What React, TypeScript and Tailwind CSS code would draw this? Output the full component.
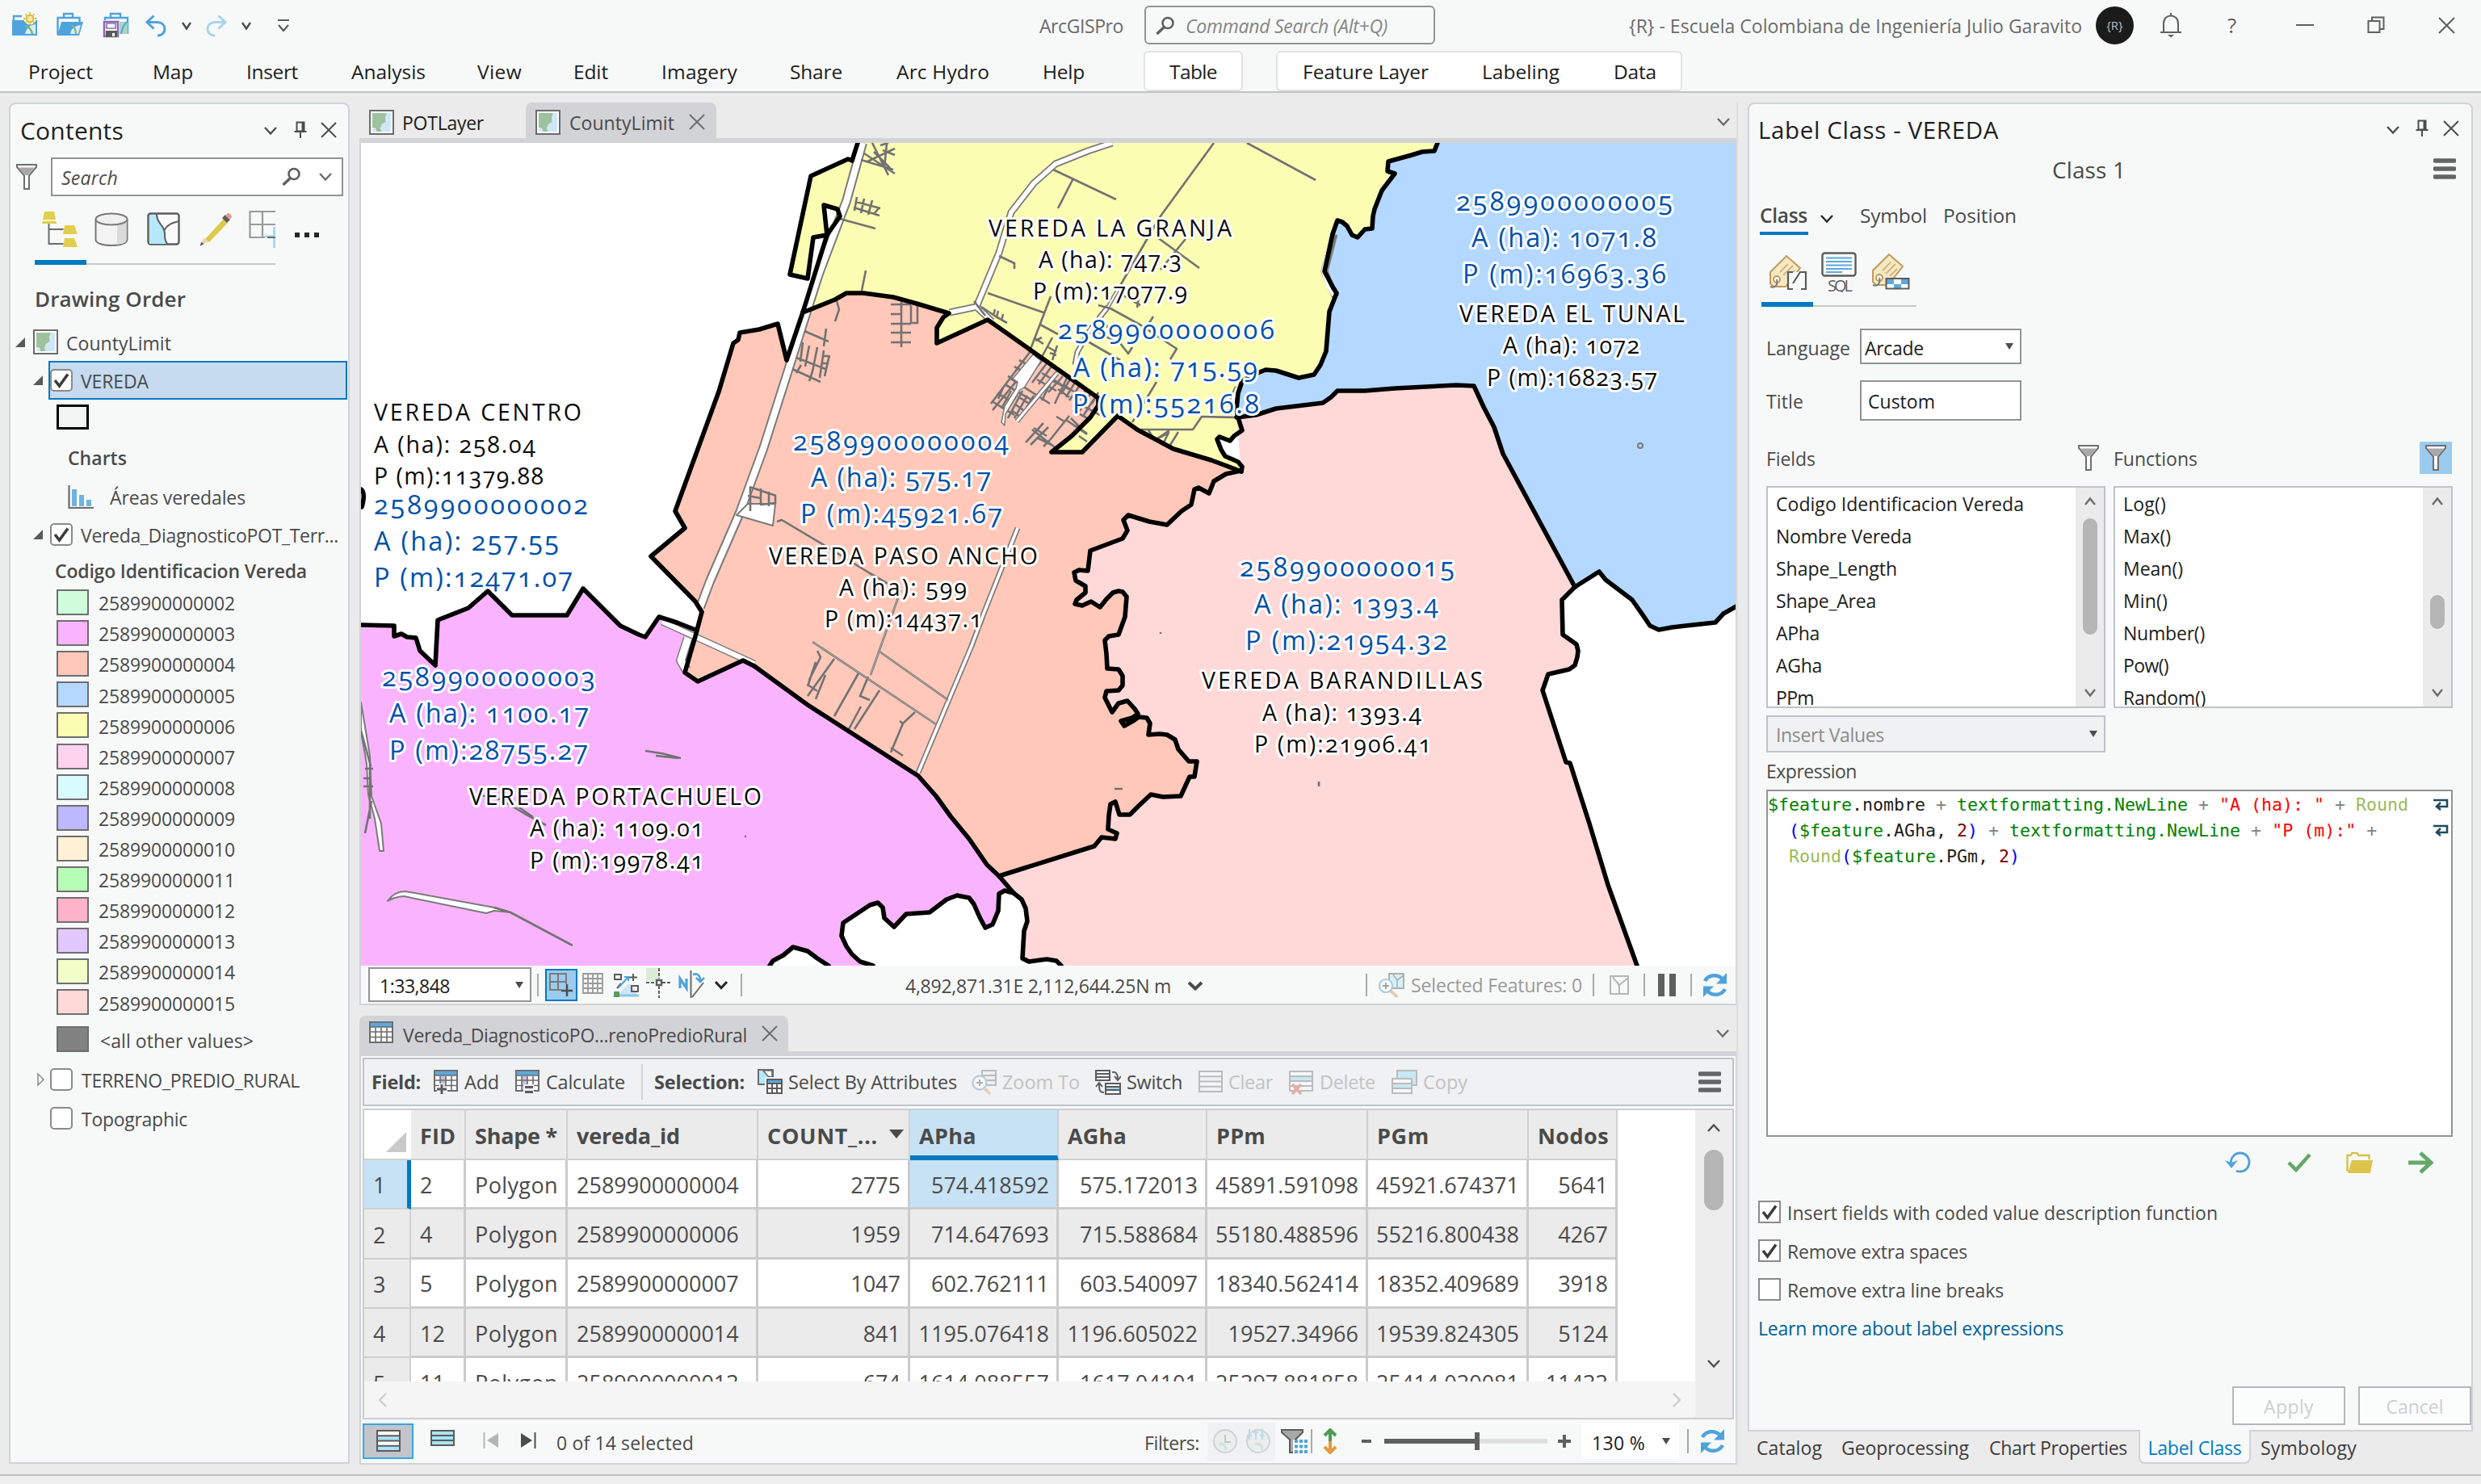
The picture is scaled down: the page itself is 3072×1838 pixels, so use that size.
import React, { useLayoutEffect, useRef } from "react";

/* ------------------------------------------------------------------ */
/* Text helper: spreads a label over a fixed advance width             */
/* ------------------------------------------------------------------ */
function Fit({ w, className = "", children }: { w: number; className?: string; children: string }) {
  const ref = useRef<HTMLSpanElement>(null);
  useLayoutEffect(() => {
    const el = ref.current;
    if (!el) return;
    el.style.letterSpacing = "0px";
    const natural = el.getBoundingClientRect().width;
    el.style.letterSpacing = `${(w - natural) / Math.max(1, children.length)}px`;
  }, [w, children]);
  return (
    <span ref={ref} className={`inline-block flex-none whitespace-pre ${className}`}>
      {children}
    </span>
  );
}

type SvgProps = { w: number; h: number; className?: string; children: React.ReactNode };
function Icon({ w, h, className = "", children }: SvgProps) {
  return (
    <svg width={w} height={h} viewBox={`0 0 ${w} ${h}`} fill="none" className={`flex-none ${className}`}>
      {children}
    </svg>
  );
}

const Chevron = ({ className = "", w = 16, c = "#4c4c4c", sw = 2.4, up = false }: { className?: string; w?: number; c?: string; sw?: number; up?: boolean }) => (
  <Icon w={w} h={12} className={className}>
    <path d={up ? `M1 10L${w / 2} 2.5L${w - 1} 10` : `M1 2L${w / 2} 9.5L${w - 1} 2`} stroke={c} strokeWidth={sw} />
  </Icon>
);
const Cross = ({ s = 20, className = "", c = "#4c4c4c" }: { s?: number; className?: string; c?: string }) => (
  <Icon w={s} h={s} className={className}>
    <path d={`M1 1L${s - 1} ${s - 1}M${s - 1} 1L1 ${s - 1}`} stroke={c} strokeWidth={2} />
  </Icon>
);
const Pin = ({ className = "" }: { className?: string }) => (
  <Icon w={16} h={22} className={className}>
    <path d="M3.5 1.5h9v11h-9zM0.5 13h15M8 13v8M10.5 2v11" stroke="#4c4c4c" strokeWidth={2} />
  </Icon>
);
const Tri = ({ className = "" }: { className?: string }) => (
  <Icon w={10} h={8} className={className}>
    <path d="M0 0h10L5 8z" fill="#4c4c4c" />
  </Icon>
);
const Expander = ({ className = "" }: { className?: string }) => (
  <Icon w={14} h={14} className={className}>
    <path d="M13 1v12H1z" fill="#5a5a5a" />
  </Icon>
);
const Funnel = ({ className = "" }: { className?: string }) => (
  <Icon w={28} h={34} className={className}>
    <path d="M2 2h24v3l-9 10.500v16.500h-6V15.500L2 5z" fill="#fff" stroke="#6e6e6e" strokeWidth={2} />
    <path d="M4 5.500h20l-8 9.500h-4z" fill="#a8a8a8" />
  </Icon>
);
const Magnifier = ({ className = "" }: { className?: string }) => (
  <Icon w={24} h={24} className={className}>
    <circle cx="15" cy="8.500" r="6.500" stroke="#5f5f5f" strokeWidth={2.6} />
    <path d="M10.500 13.500L1.500 22" stroke="#5f5f5f" strokeWidth={3.4} />
  </Icon>
);
const MapIcon = ({ className = "" }: { className?: string }) => (
  <Icon w={31} h={31} className={className}>
    <rect x="1" y="1" width="29" height="29" fill="#fff" stroke="#6b6b6b" strokeWidth={2} />
    <path d="M4 4h18l-2 6 1 5-5 3-2 5 2 4H9l-1-4-4-1z" fill="#9cc29e" />
    <path d="M22 4h5v23H16l-2-4 2-5 5-3-1-5zM4 23l4 1 1 3H4z" fill="#cfe6f8" />
  </Icon>
);
const Hamburger = ({ className = "" }: { className?: string }) => (
  <Icon w={28} h={26} className={className}>
    <path d="M2 3h24M2 13h24M2 23h24" stroke="#646464" strokeWidth={5.500} strokeLinecap="round" />
  </Icon>
);
const Refresh = ({ className = "" }: { className?: string }) => (
  <Icon w={33} h={32} className={className}>
    <path d="M4 11C8 3.500 19 1.500 26 8.500" stroke="#4fa3dc" strokeWidth={4.500} />
    <path d="M31 1v13.500H18z" fill="#4fa3dc" />
    <path d="M29 21C25 28.500 14 30.500 7 23.500" stroke="#4fa3dc" strokeWidth={4.500} />
    <path d="M2 31V17.500h13z" fill="#4fa3dc" />
  </Icon>
);
const Sep = ({ className = "" }: { className?: string }) => <div className={`w-[2px] flex-none bg-[#a9a9a9] ${className}`} />;

/* ------------------------------------------------------------------ */
/* Title bar and ribbon tabs                                           */
/* ------------------------------------------------------------------ */
function TitleBar() {
  return (
    <div className="flex h-[62px] items-center text-[23px] text-[#6b6b6b]">
      <Icon w={32} h={30} className="ml-[15px] mb-[3px]">
        <path d="M2 10V5h10" stroke="#4fa3dc" strokeWidth={2.4} />
        <rect x="0" y="10" width="31" height="19" fill="#4fa3dc" />
        <path d="M16 27c2-9 7-11 13-12v12z" fill="#d9ecf9" />
        <path d="M16 17c5 1 8 5 9 10" stroke="#7bb77d" strokeWidth={2.500} />
        <circle cx="22" cy="8" r="7.500" fill="#fff" />
        <circle cx="22" cy="8" r="4.500" fill="#f7e9a0" stroke="#d9b535" strokeWidth={2} />
        <path d="M22 0v2M22 14v2M14 8h2M28 8h2M16.300 2.300l1.500 1.500M26.200 12.200l1.500 1.500M27.700 2.300l-1.500 1.500M17.800 12.200l-1.500 1.500" stroke="#d9b535" strokeWidth={1.800} />
      </Icon>
      <Icon w={33} h={30} className="ml-[23px] mb-[3px]">
        <path d="M9 7V2h11v5M1.500 28V7h27v5" stroke="#4fa3dc" strokeWidth={2.400} />
        <path d="M6 12h27l-5 17H1z" fill="#4fa3dc" />
        <path d="M17 27c1-7 6-10 13-11l-3 11z" fill="#d9ecf9" />
        <path d="M19 17c4 2 5 5 5 10" stroke="#7bb77d" strokeWidth={2.400} />
      </Icon>
      <Icon w={33} h={34} className="ml-[24px] mt-[1px]">
        <path d="M10 7V2h12v5M3 10V7h28v20" stroke="#4fa3dc" strokeWidth={2.400} />
        <path d="M21 12h10v15H21z" fill="#a8d5c0" />
        <path d="M30 12c-4 4-6 9-7 15" stroke="#4fa3dc" strokeWidth={2} />
        <path d="M2 12h17v18H2z" fill="#fff" stroke="#8b6bb8" strokeWidth={2.600} />
        <path d="M5 14h11v6H5z" fill="#fff" stroke="#8b6bb8" strokeWidth={1.600} />
        <path d="M4 23h14v8H4z" fill="#5b5b5b" />
        <path d="M12 26h3v4h-3z" fill="#fff" />
      </Icon>
      <Icon w={28} h={28} className="ml-[19px] mt-[1px]">
        <path d="M3 9.500h12c7 0 10 4 10 8.500 0 4-3 8-9 8" stroke="#4fa3dc" strokeWidth={3} />
        <path d="M11.500 1.500L3 9.500l8.500 8" stroke="#4fa3dc" strokeWidth={3} />
      </Icon>
      <Chevron className="ml-[18px] mt-[2px]" w={12} />
      <Icon w={28} h={28} className="ml-[17px] mt-[1px]">
        <path d="M25 9.500H13c-7 0-10 4-10 8.500 0 4 3 8 9 8" stroke="#a9d3ee" strokeWidth={3} />
        <path d="M16.500 1.500L25 9.500l-8.500 8" stroke="#a9d3ee" strokeWidth={3} />
      </Icon>
      <Chevron className="ml-[17px] mt-[2px]" w={12} />
      <Icon w={16} h={18} className="ml-[32px] mt-[1px]">
        <path d="M1 2h14M2 8l6 7 6-7" stroke="#5b5b5b" strokeWidth={2.200} />
      </Icon>
      <Fit w={104} className="ml-[928px] mt-[3px]">ArcGISPro</Fit>
      <div className="ml-[26px] flex h-[48px] w-[360px] flex-none items-center rounded-[6px] border-2 border-[#939393]">
        <Magnifier className="ml-[12px] mt-[2px]" />
        <Fit w={250} className="ml-[13px] mt-[3px] italic text-[#858585]">Command Search (Alt+Q)</Fit>
      </div>
      <Fit w={561} className="ml-[240px] mt-[3px]">{"{R} - Escuela Colombiana de Ingeniería Julio Garavito"}</Fit>
      <div className="ml-[17px] flex size-[47px] flex-none items-center justify-center rounded-full bg-[#1b1b1b] text-[15px] text-[#bdbdbd]">
        {"{R}"}
      </div>
      <Icon w={28} h={32} className="ml-[32px]">
        <path d="M5 24v-10c0-6 4-9.500 9-9.500s9 3.500 9 9.500v10M1 25h26M14 4.500V1" stroke="#5f5f5f" strokeWidth={2} />
        <path d="M10 28h8l-4 3.500z" fill="#5f5f5f" />
      </Icon>
      <span className="ml-[56px] w-[20px] text-[26px] text-[#5f5f5f]">?</span>
      <Icon w={22} h={4} className="ml-[65px]"><path d="M0 2h22" stroke="#5f5f5f" strokeWidth={2} /></Icon>
      <Icon w={22} h={22} className="ml-[66px]">
        <path d="M1.500 6h14v14h-14zM6 6V1.500h14.500V16H16" stroke="#5f5f5f" strokeWidth={2} />
      </Icon>
      <Cross s={21} className="ml-[66px]" c="#5f5f5f" />
    </div>
  );
}

const menus: [string, number, number][] = [
  ["Project", 35, 80], ["Map", 74, 50], ["Insert", 66, 64], ["Analysis", 66, 92], ["View", 64, 55], ["Edit", 64, 43],
  ["Imagery", 66, 94], ["Share", 65, 65], ["Arc Hydro", 67, 115], ["Help", 66, 52],
];

function Ribbon() {
  return (
    <div className="flex h-[51px] items-center text-[24.500px] text-[#1c1c1c]">
      {menus.map(([t, gap, w]) => (
        <span key={t} className="mt-[4px] flex-none" style={{ marginLeft: gap }}>
          <Fit w={w}>{t}</Fit>
        </span>
      ))}
      <div className="ml-[73px] flex h-[50px] w-[123px] flex-none items-center justify-center rounded-[6px] border-2 border-[#e2e2e2] bg-white">
        <Fit w={59} className="mt-[4px]">Table</Fit>
      </div>
      <div className="ml-[41px] flex h-[50px] w-[503px] flex-none items-center rounded-[6px] border-2 border-[#e2e2e2] bg-white">
        <Fit w={156} className="ml-[31px] mt-[4px]">Feature Layer</Fit>
        <Fit w={96} className="ml-[66px] mt-[4px]">Labeling</Fit>
        <Fit w={53} className="ml-[67px] mt-[4px]">Data</Fit>
      </div>
    </div>
  );
}

/* ------------------------------------------------------------------ */
/* Contents pane                                                       */
/* ------------------------------------------------------------------ */
const swatches: [string, string][] = [
  ["2589900000002", "bg-[#d0fedd]"], ["2589900000003", "bg-[#fab4ff]"], ["2589900000004", "bg-[#ffc8b9]"],
  ["2589900000005", "bg-[#b4d8ff]"], ["2589900000006", "bg-[#fbfdb3]"], ["2589900000007", "bg-[#fed3ee]"],
  ["2589900000008", "bg-[#d8fbff]"], ["2589900000009", "bg-[#bdb8ff]"], ["2589900000010", "bg-[#fff0d6]"],
  ["2589900000011", "bg-[#b6feb5]"], ["2589900000012", "bg-[#feb3c8]"], ["2589900000013", "bg-[#e1c8ff]"],
  ["2589900000014", "bg-[#f1fec8]"], ["2589900000015", "bg-[#ffd8d8]"],
];

const CheckMark = () => (
  <Icon w={22} h={22}>
    <path d="M3 11l5.500 7L19 3.500" stroke="#3c3c3c" strokeWidth={3.600} />
  </Icon>
);
const TocCheck = ({ on = false, className = "" }: { on?: boolean; className?: string }) => (
  <div className={`flex size-[28px] flex-none items-center justify-center rounded-[5px] border-2 border-[#8a8a8a] bg-white ${className}`}>
    {on && <CheckMark />}
  </div>
);

function Contents() {
  return (
    <div className="flex w-[422px] flex-none flex-col rounded-t-[8px] border-2 border-[#d0d3d7] bg-[#f7f9f8] text-[23px] text-[#4a4a4a]">
      <div className="flex h-[65px] flex-none items-center">
        <Fit w={128} className="ml-[12px] text-[30px] text-[#1f1f1f]">Contents</Fit>
        <Chevron className="ml-[174px]" />
        <Pin className="ml-[21px] mb-[2px]" />
        <Cross className="ml-[17px] mb-[2px]" />
      </div>
      <div className="flex h-[50px] flex-none items-center">
        <Funnel className="ml-[6px]" />
        <div className="ml-[16px] flex h-[48px] w-[362px] items-center border-2 border-[#939393] bg-white">
          <Fit w={70} className="ml-[11px] mt-[2px] italic">Search</Fit>
          <Magnifier className="ml-[203px]" />
          <Chevron className="ml-[22px]" c="#6b6b6b" />
        </div>
      </div>
      <div className="flex h-[78px] flex-none items-center pt-[2px]">
        <Icon w={46} h={46} className="ml-[39px]">
          <path d="M8.500 16v25h18M8.500 23h18" stroke="#6b6b6b" strokeWidth={2} />
          <path d="M3 1h12l3 15H0zM28 18h12l4 11H26zM28 34h12l4 11H26z" fill="#e3cd4c" />
          <path d="M0 12h18" stroke="#fff" strokeWidth={1.500} />
        </Icon>
        <Icon w={42} h={42} className="ml-[19px]">
          <path d="M1.500 8v26c0 4 8 7 19.500 7s19.500-3 19.500-7V8" fill="#f3f3f3" stroke="#7a7a7a" strokeWidth={2} />
          <path d="M28 14v26c8-1 11.500-3 11.500-6V10z" fill="#dadada" />
          <ellipse cx="21" cy="8.500" rx="19.500" ry="7" fill="#f0f0f0" stroke="#7a7a7a" strokeWidth={2} />
        </Icon>
        <Icon w={42} h={42} className="ml-[23px]">
          <rect x="1.500" y="1.500" width="38" height="38" rx="3" fill="#fafafa" stroke="#5b5b5b" strokeWidth={2.400} />
          <path d="M3 3h10c0 12 8 12 9 23 0 6 0 8 3 13H3z" fill="#b4e8fa" />
          <path d="M12 2c0 13 9 12 10 24 0 6 0 8 3 13M21 23c4-8 10-10 19-12" stroke="#5b5b5b" strokeWidth={2} />
        </Icon>
        <Icon w={42} h={42} className="ml-[22px]">
          <path d="M8 33L31 8l5 5L13 37z" fill="#e0c84c" />
          <path d="M3 40l3-9 6 6z" fill="#e8d8b0" /><path d="M1.500 41.500l2-5 3 3z" fill="#5b5b5b" />
          <path d="M29 7l4-4 6 6-4 4z" fill="#5b5b5b" />
          <path d="M33 4l3-3c3 0 5 3 5 5l-3 3z" fill="#e29a96" />
        </Icon>
        <Icon w={33} h={46} className="ml-[20px]">
          <path d="M33 1H1.500v32H20M1.500 17H33M17 1v32" stroke="#9a9a9a" strokeWidth={2.200} />
          <path d="M31.500 20v26M20 32h12" stroke="#a6d8f6" strokeWidth={3} />
          <path d="M23 33h10" stroke="#6b6b6b" strokeWidth={2} />
        </Icon>
        <div className="ml-[24px] mt-[14px] flex gap-[6px]">
          <div className="size-[6px] bg-[#262626]" /><div className="size-[6px] bg-[#262626]" /><div className="size-[6px] bg-[#262626]" />
        </div>
      </div>
      <div className="ml-[30px] flex h-[6px] w-[298px] flex-none items-end">
        <div className="h-[6px] w-[64px] bg-[#0079c1]" />
        <div className="h-[2px] flex-1 bg-[#c8c8c8]" />
      </div>
      <div className="flex h-[78px] flex-none items-center pt-[6px]">
        <Fit w={187} className="ml-[30px] text-[26px] font-semibold">Drawing Order</Fit>
      </div>
      <div className="flex h-[35px] flex-none items-center">
        <Expander className="ml-[5px]" />
        <MapIcon className="ml-[9px]" />
        <Fit w={130} className="ml-[10px] mt-[3px]">CountyLimit</Fit>
      </div>
      <div className="mt-[6px] flex h-[48px] flex-none items-center">
        <Expander className="ml-[27px]" />
        <div className="ml-[6px] flex h-[48px] w-[370px] items-center border-2 border-[#0079c1] bg-[#c6dbf0]">
          <TocCheck on />
          <Fit w={84} className="ml-[10px] mt-[2px]">VEREDA</Fit>
        </div>
      </div>
      <div className="flex h-[42px] flex-none items-center">
        <div className="ml-[57px] h-[31px] w-[40px] border-[3px] border-black bg-[#f3f4f4]" />
      </div>
      <div className="flex h-[58px] flex-none items-center pt-[2px]">
        <Fit w={73} className="ml-[71px] font-semibold">Charts</Fit>
      </div>
      <div className="flex h-[42px] flex-none items-center">
        <Icon w={32} h={30} className="ml-[71px]">
          <path d="M1.500 0v28H32" stroke="#6b6b6b" strokeWidth={2.200} />
          <path d="M5 5h6v21H5zM14 12h6v14h-6zM23 18h6v8h-6z" fill="#6cb3e3" />
        </Icon>
        <Fit w={168} className="ml-[20px]">Áreas veredales</Fit>
      </div>
      <div className="flex h-[50px] flex-none items-center">
        <Expander className="ml-[27px]" />
        <TocCheck on className="ml-[8px]" />
        <Fit w={319} className="ml-[10px] mt-[3px]">Vereda_DiagnosticoPOT_Terr...</Fit>
      </div>
      <div className="flex h-[40px] flex-none items-center">
        <Fit w={312} className="ml-[55px] font-semibold">Codigo Identificacion Vereda</Fit>
      </div>
      <div className="flex flex-none flex-col">
        {swatches.map(([t, c]) => (
          <div key={t} className="flex h-[38.100px] flex-none items-center">
            <div className={`ml-[57px] h-[32px] w-[40px] border-2 border-[#6e6e6e] ${c}`} />
            <Fit w={169} className="ml-[12px] mt-[3px]">{t}</Fit>
          </div>
        ))}
      </div>
      <div className="flex h-[53px] flex-none items-center">
        <div className="ml-[57px] h-[32px] w-[40px] border-2 border-[#6e6e6e] bg-[#828282]" />
        <Fit w={190} className="ml-[14px] mt-[4px]">{"<all other values>"}</Fit>
      </div>
      <div className="flex h-[47px] flex-none items-center">
        <Icon w={9} h={18} className="ml-[33px]"><path d="M1 2l7 7-7 7z" fill="#fff" stroke="#8a8a8a" strokeWidth={1.500} /></Icon>
        <TocCheck className="ml-[7px]" />
        <Fit w={270} className="ml-[11px] mt-[2px]">TERRENO_PREDIO_RURAL</Fit>
      </div>
      <div className="flex h-[49px] flex-none items-center">
        <TocCheck className="ml-[49px]" />
        <Fit w={131} className="ml-[11px] mt-[2px]">Topographic</Fit>
      </div>
    </div>
  );
}

/* ------------------------------------------------------------------ */
/* Map                                                                 */
/* ------------------------------------------------------------------ */
const granjaOrange =
  "994,387 1034,371 1048,363 1069,363 1106,368 1135,376 1175,388 1168,393 1160,406 1160,425 1223,396 1257,420 1360,493 1360,502 1350,517 1327,540 1302,560 1340,560 1384,515 1408,532 1453,556 1500,570 1537,584";
const granjaEast =
  "1537,584 1538,578 1533,572 1517,565 1512,557 1507,544 1510,541 1523,546 1528,540 1538,533 1533,517 1531,507 1533,487 1538,472 1557,462 1567,458 1580,459 1608,468 1627,464 1635,452 1642,435 1646,386 1655,363 1650,355 1640,336 1650,290 1656,273 1662,275 1668,280 1674,291 1681,294 1690,284 1699,283 1700,268 1702,259 1711,236 1727,215 1718,212 1719,200 1748,192 1761,188 1776,187 1780,177";
const orangeWest =
  "994,387 974,446 963,401 940,408 916,412 914,421 908,425 890,485 836,633 848,654 806,689 861,745 869,758 861,788 848,833 864,844 920,818 934,825";
const portaEast =
  "934,825 1000,873 1137,961 1159,986 1177,1011 1200,1039 1222,1071 1237,1085";
const orangeEast =
  "1237,1085 1355,1048 1364,1037 1381,1039 1383,1032 1372,1027 1373,1010 1375,996 1381,993 1386,1009 1399,1009 1410,998 1425,984 1440,987 1462,986 1473,962 1479,962 1482,943 1472,943 1459,928 1455,916 1445,910 1436,909 1422,910 1424,896 1420,889 1410,888 1403,893 1392,899 1388,893 1402,889 1409,884 1405,878 1396,868 1385,871 1377,882 1368,864 1370,856 1385,855 1390,849 1390,837 1385,829 1371,828 1370,810 1368,793 1373,788 1385,786 1393,764 1395,739 1390,733 1385,732 1378,734 1370,742 1362,752 1351,745 1340,750 1331,748 1333,743 1344,734 1344,726 1332,719 1330,709 1336,706 1347,707 1350,682 1390,667 1396,657 1391,644 1397,638 1423,646 1445,650 1463,633 1475,625 1479,606 1484,604 1497,611 1503,596 1518,587 1537,583";
const tunalSouth =
  "1531,517 1555,514 1580,506 1638,499 1648,492 1656,484 1690,484 1727,481 1803,477 1825,478 1837,504 1850,529 1861,562 1950,727";
const barEast =
  "1950,727 1934,743 1935,786 1952,798 1954,806 1953,814 1950,824 1943,829 1917,835 1910,855 1939,944 1944,945 1968,1020 1991,1096 2027,1196";
const barWest =
  "1314,1196 1308,1190 1296,1188 1274,1191 1266,1187 1268,1153 1272,1141 1270,1125 1265,1114 1255,1106 1237,1085";
const tunalEast = "1950,727 1980,708 1988,718 2021,743 2035,763 2043,775 2054,780 2070,777 2087,775 2124,771 2134,760 2150,751";
const portaNorth =
  "447,774 488,775 488,788 497,785 504,789 515,790 520,806 539,824 542,768 580,753 604,732 634,762 702,762 722,729 768,775 791,786 799,789 816,764 838,771 861,780";
const portaSouth =
  "1255,1106 1244,1103 1237,1107 1236,1128 1229,1145 1220,1149 1213,1136 1206,1120 1200,1112 1185,1109 1172,1114 1151,1130 1122,1132 1107,1148 1095,1137 1093,1124 1087,1118 1077,1121 1044,1143 1042,1159 1048,1172 1055,1182 1065,1191 1081,1196";
const portaBite = "953,1196 957,1190 970,1183 982,1173 1000,1178 1012,1187 1026,1196";

const rev = (s: string) => s.split(" ").reverse().join(" ");

const boundaries = [
  granjaOrange, granjaEast, orangeWest, portaEast, orangeEast, tunalSouth, barEast, barWest, tunalEast, portaNorth, portaSouth, portaBite,
  "994,387 1024,291 1040,268 1037,259 1020,254 1024,291 1007,294 1000,345 978,340 1004,218 1050,197 1055,199 1062,177",
];

const grayRoads = [
  "M1503 177L1436 269L1384 359M1544 177L1629 223M1304 210L1382 247M1329 221L1310 258M1237 317L1256 326V333M1223 363L1292 387M1301 367L1275 435M1288 402L1310 414",
  "M1433 294L1485 332M1468 296L1437 334M1360 378L1375 382L1413 403L1457 432L1449 445M1347 423L1387 446M1362 393L1397 438L1402 430M1355 408L1380 423M1428 392L1421 403M1432 473L1402 523M1412 356L1408 381M1391 366L1412 378",
  "M1413 532H1477L1488 516L1533 517M1422 533l8 12l17 -9l-6 12M1459 535l-10 16M1430 545l18 -12",
  "M1040 271L1084 283M1072 335L1067 360M1036 373l3 10l-5 15",
  "M1070 190l38 25M1074 200l34 -16M1080 177l20 40M1090 180l10 -3M1098 178l-3 30M1082 188l20 20M1066 198l40 12M1093 186l15 6",
  "M1061 244l-3 17M1070 246l-4 18M1080 248l-5 18M1057 257l32 10M1060 250l30 8M1088 258l-6 7",
  "M1116 374V430M1103 377h25M1103 389h13M1103 401h25M1103 412h25M1103 424h25M1128 378v22h8v-24",
  "M996 410l30 13M1023 407l-3 22M994 424l-3 24M1002 428l-5 26M1012 430l-6 30M1020 434l-5 34M1027 440l-6 26M986 443l36 14M981 457l35 16M1026 441h-8M1026 450h-8M992 452l-6 10M1006 460l-4 12",
  "M928 603l33 11M929 603v30M960 614v10M926 614l16 3v8l18 -2M942 605v20M952 609v18",
  "M1206 373l14 18M1232 383l-2 8M1236 385l-2 8M1242 389l-2 8M1215 380l18 12l14 8",
  "M962 646l6 -2L1025 678L1077 710L1115 732L1078 836M1006 795L1159 897M1089 807L1174 867M1033 816L1000 862M1063 834L1033 887M1089 855L1058 903M1012 806l4 8l-14 28M1000 848l12 8M1022 836l-12 30M1075 838l-10 24l12 5M1133 882l-15 14l-15 36M1118 896l-4 -3M1103 926l15 10M1050 905l16 -30M1010 820l-10 30",
  "M458 944v70M452 952h10M450 964h10M450 974h12M447 905l12 44M460 992l-8 40",
  "M799 930l20 3l24 6M812 936l28 3M590 984l30 6l30 18l26 14M640 998l20 14",
  "M612 1124l20 6L709 1171M1380 977h10M1633 968v6M1437 783v2M922 1036h2",
];

/* Dense street block next to the granja boundary */
const village = [
  "M1276 435L1227 500M1284 441L1229 508M1291 446L1262 479M1250 468L1300 500M1244 476L1282 498",
  "M1303 418L1283 455M1309 428L1303 446M1280 418l12 8M1290 418l-8 4M1298 430l10 6M1300 437l8 3",
  "M1262 446l14 8M1256 454l14 8M1248 466l12 6",
  "M1235 487l14 8M1230 498l26 16M1242 480l-6 14M1252 484l-12 22M1260 488l-14 22",
  "M1266 484l-18 34M1272 490l-16 28M1280 490l-18 30M1287 489l-24 28M1262 492l14 9M1256 500l14 10M1252 508l14 10",
  "M1296 450L1278 474M1302 454L1286 476M1308 460L1290 496M1316 466L1298 486M1322 466L1306 500M1290 462l24 14M1284 470l24 14M1304 472l20 10",
  "M1326 468l-12 20M1332 472l-12 20M1338 476l-14 20M1316 476l18 12M1310 482l14 10",
  "M1344 484l-14 20M1350 488l-14 22M1356 492l-14 22M1336 500l26 14M1328 508l22 12M1360 486l-8 14M1324 515l-24 30M1320 520l26 18M1332 527l14 10M1318 522l-10 -6",
  "M1300 545l-8 8M1278 532l28 22M1292 524l-22 24M1298 529l-22 22M1280 530l16 10M1284 542l20 10M1326 518l10 10M1336 540l10 7",
];

type Lbl = [string, number, number, number];
const blueLabels: Lbl[] = [
  ["2589900000002", 463, 728, 637], ["A (ha): 257.55", 463, 692, 682], ["P (m):12471.07", 463, 709, 727],
  ["2589900000003", 473, 737, 850], ["A (ha): 1100.17", 482, 729, 895], ["P (m):28755.27", 482, 728, 941],
  ["2589900000004", 982, 1249, 558], ["A (ha): 575.17", 1004, 1227, 603], ["P (m):45921.67", 991, 1241, 648],
  ["2589900000006", 1310, 1578, 420], ["A (ha): 715.59", 1329, 1557, 467], ["P (m):55216.8", 1328, 1559, 512],
  ["2589900000005", 1803, 2071, 261], ["A (ha): 1071.8", 1822, 2051, 306], ["P (m):16963.36", 1811, 2063, 351],
  ["2589900000015", 1535, 1801, 714], ["A (ha): 1393.4", 1553, 1781, 760], ["P (m):21954.32", 1542, 1792, 805],
];
const blackLabels: Lbl[] = [
  ["VEREDA CENTRO", 463, 720, 521], ["A (ha): 258.04", 463, 663, 561], ["P (m):11379.88", 463, 673, 600],
  ["VEREDA PORTACHUELO", 581, 943, 997], ["A (ha): 1109.01", 656, 871, 1036], ["P (m):19978.41", 656, 871, 1076],
  ["VEREDA LA GRANJA", 1224, 1525, 293], ["A (ha): 747.3", 1286, 1463, 332], ["P (m):17077.9", 1279, 1470, 371],
  ["VEREDA EL TUNAL", 1807, 2086, 399], ["A (ha): 1072", 1861, 2030, 438], ["P (m):16823.57", 1841, 2052, 478],
  ["VEREDA BARANDILLAS", 1488, 1836, 853], ["A (ha): 1393.4", 1563, 1760, 893], ["P (m):21906.41", 1553, 1772, 932],
  ["VEREDA PASO ANCHO", 952, 1285, 699], ["A (ha): 599", 1039, 1197, 738], ["P (m):14437.1", 1021, 1216, 777],
];

function MapView() {
  const cased = (d: string, outer: number, inner: number) => (
    <>
      <path d={d} stroke="#7a7a7a" strokeWidth={outer} />
      <path d={d} stroke="#fff" strokeWidth={inner} />
    </>
  );
  return (
    <svg viewBox="447 177 1702 1019" width={1702} height={1019} fill="none" strokeLinejoin="round" className="block flex-none bg-white">
      <polygon fill="#b4d8ff" points={`1700,177 2150,177 ${rev(tunalEast)} ${rev(tunalSouth)} 1531,475 1600,440 1630,420 1630,300 1680,210`} />
      <polygon fill="#fbfdb3" points={`${granjaOrange} ${granjaEast} 1062,177 1055,199 1050,197 1004,218 978,340 1000,345 1007,294 1024,291 1020,254 1037,259`} />
      <polygon fill="#ffd8d8" points={`${tunalSouth} ${barEast} ${barWest} ${orangeEast}`} />
      <polygon fill="#ffc8b9" points={`${granjaOrange} ${rev(orangeEast)} ${rev(portaEast)} ${rev(orangeWest)}`} />
      <polygon fill="#fab4ff" points={`${portaNorth} 848,833 864,844 920,818 ${portaEast} ${portaSouth} ${rev(portaBite)} 447,1196`} />

      {cased("M1068 177L1048 249L1014 339L997 392L980 446L945 556L916 635L879 720L867 752", 12, 8)}
      {cased("M1377 177L1347 187L1307 203L1280 227L1252 263L1237 313L1209 380L1176 387M1209 380L1228 398", 9, 5.500)}
      {cased("M1372 380L1350 408L1334 436L1331 452", 7, 3.500)}
      {cased("M1384 359L1372 380", 5, 2)}
      {cased("M1260 654L1218 760L1203 800L1137 957", 7, 3.500)}
      {cased("M820 770L934 822", 9, 6)}
      {cased("M852 790L843 818L850 830", 12, 9)}
      <path d="M926 624h34l-3 27l-45 -13z" fill="#fff" stroke="#7a7a7a" strokeWidth={2} />
      <path d="M480 1116q8 -12 22 -12L612 1124l20 6l-20 -2l-10 3L500 1110q-12 1 -20 6z" fill="#fff" stroke="#7a7a7a" strokeWidth={2} />
      <path d="M447 870l11 66l2 50l12 34l3 34h-5l-6 -40l-8 -30l-2 -38l-7 -40z" fill="#fff" stroke="#7a7a7a" strokeWidth={2} />
      <g stroke="#727272" strokeWidth={2.600} fill="none">
        {grayRoads.map((d) => <path key={d} d={d} />)}
        {village.map((d) => <path key={d} d={d} />)}
      </g>
      <path d="M1006 795L1159 897M1089 807L1174 867M1115 732L1078 836" stroke="#c9c2be" strokeWidth={0.800} />
      <path d="M1279 439l10 8l-20 32l-6 4l-18 30l-1 14l-4 -4l4 -20l14 -22l2 -8l-6 -4z" fill="#fff" stroke="#7a7a7a" strokeWidth={1.500} />
      {cased("M1309 462L1259 522", 6, 3)}
      <path d="M1652 290l-12 46l8 20l6 12M1533 480l-6 14v20" stroke="#7a7a7a" strokeWidth={9} />
      <path d="M1649 290l-11 46l7 20l6 10M1532 480l-5 14v20" stroke="#fff" strokeWidth={4} />
      <circle cx="2031" cy="552" r="3" stroke="#7a7a7a" strokeWidth={2} />

      <g stroke="#000" strokeWidth={5.600} strokeLinejoin="round" strokeLinecap="round">
        {boundaries.map((p) => <polyline key={p} points={p} />)}
        <path d="M447 606q6 4 1 22" />
      </g>

      <g className="oldstyle-nums font-['Open_Sans',sans-serif]" stroke="#fff" strokeWidth={6} paintOrder="stroke">
        {blackLabels.map(([t, a, b, y]) => (
          <text key={t + y} x={a} y={y} fontSize={28.500} fill="#0a0a0a" textLength={b - a}>{t}</text>
        ))}
        {blueLabels.map(([t, a, b, y]) => (
          <text key={t + y} x={a} y={y} fontSize={32.500} fill="#0050aa" textLength={b - a}>{t}</text>
        ))}
      </g>
    </svg>
  );
}

const TableIcon = ({ className = "", mark = "" }: { className?: string; mark?: "" | "+" | "=" }) => (
  <Icon w={31} h={30} className={className}>
    <rect x="1" y="1" width="28" height="25" fill="#fff" stroke="#6b6b6b" strokeWidth={2} />
    <rect x="1" y="1" width="28" height="6" fill="#5da8dc" stroke="#6b6b6b" strokeWidth={1.500} />
    {mark && <rect x="8" y="8" width="7" height="17" fill="#c6bfe0" />}
    <path d="M1 13h28M1 19.500h28M8 8v18M15 8v18M22 8v18" stroke="#6b6b6b" strokeWidth={1.600} />
    {mark === "+" && <path d="M10 17v13M4 24h13" stroke="#f0f1f3" strokeWidth={7} />}
    {mark === "+" && <path d="M10 18v12M4 24h12" stroke="#5b5b5b" strokeWidth={3} />}
    {mark === "=" && <path d="M10 24h13" stroke="#f0f1f3" strokeWidth={12} />}
    {mark === "=" && <path d="M12 21.500h10M12 27.500h10" stroke="#5b5b5b" strokeWidth={3} />}
  </Icon>
);
const ListIcon = ({ a, b, className = "", s = "#6b6b6b" }: { a: string; b: string; className?: string; s?: string }) => (
  <Icon w={30} h={28} className={className}>
    <rect x="1" y="1" width="28" height="25" fill={a} />
    <path d="M1 7.300h28v6.200H1zM1 19.700h28V26H1z" fill={b} />
    <path d="M1 1h28v25H1zM1 7.300h28M1 13.500h28M1 19.700h28" stroke={s} strokeWidth={2} />
  </Icon>
);

function MapPane() {
  return (
    <div className="flex h-[1118px] flex-none flex-col">
      <div className="flex h-[44px] flex-none items-center text-[23px]">
        <MapIcon className="ml-[12px] mt-[4px]" />
        <Fit w={101} className="ml-[10px] mt-[6px] text-[#1c1c1c]">POTLayer</Fit>
        <div className="ml-[52px] flex h-[44px] w-[236px] items-center rounded-t-[8px] bg-[#d2d3d7] pt-[4px] text-[#4a4a4a]">
          <MapIcon className="ml-[12px]" />
          <Fit w={130} className="ml-[11px] mt-[2px]">CountyLimit</Fit>
          <Cross className="ml-[18px]" c="#6e6e6e" />
        </div>
        <Chevron className="ml-[1239px] mt-[4px]" c="#6b6b6b" />
      </div>
      <div className="h-[6px] flex-none bg-[#d2d3d7]" />
      <div className="flex flex-1 flex-col border-x-2 border-b-2 border-[#d0d3d7] bg-[#f7f9f8]">
        <MapView />
        <div className="flex flex-1 items-center text-[23px] text-[#4a4a4a]">
          <div className="ml-[9px] flex h-[43px] w-[202px] flex-none items-center border-2 border-[#939393] bg-white">
            <Fit w={87} className="ml-[12px] mt-[3px] text-[#1c1c1c]">1:33,848</Fit>
            <Tri className="ml-[81px]" />
          </div>
          <Sep className="ml-[7px] h-[28px]" />
          <div className="ml-[8px] flex h-[40px] w-[40px] flex-none items-center justify-center border-2 border-[#0079c1] bg-[#9bcbee]">
            <Icon w={30} h={30}>
              <path d="M1 1h20v20H1zM1 11h20M11 1v20" stroke="#7a7a7a" strokeWidth={2} />
              <path d="M15 14h8v8h-8z" fill="#9bcbee" />
              <path d="M22 14v15M15 22h14" stroke="#4c4c4c" strokeWidth={2.400} />
            </Icon>
          </div>
          <Icon w={26} h={26} className="ml-[6px] mb-[4px]">
            <path d="M1 1h24v24H1zM1 7h24M1 13h24M1 19h24M7 1v24M13 1v24M19 1v24" stroke="#9a9a9a" strokeWidth={1.800} />
          </Icon>
          <Icon w={33} h={30} className="ml-[12px]">
            <path d="M6 27h25L20 12z" fill="#cfe4f4" />
            <path d="M2 2h8v6H2zM23 16h8v7h-8z" stroke="#5b5b5b" strokeWidth={2} />
            <path d="M1 23h7v7H1z" fill="#5a9a5c" />
            <path d="M25 1v9M20 5.500h10M10 13l-5 6" stroke="#5b5b5b" strokeWidth={2} />
            <path d="M7 18L19 5M14 5h5v5" stroke="#4fa3dc" strokeWidth={2} />
            <path d="M8 28h24" stroke="#8cc3ea" strokeWidth={3} />
          </Icon>
          <Icon w={32} h={38} className="ml-[8px] mb-[4px]">
            <rect x="0" y="0" width="16" height="16" fill="#dbecd8" />
            <path d="M16 0v13M16 22v15M0 18h12M20 18h12" stroke="#5b5b5b" strokeWidth={2} strokeDasharray="4 2" />
            <rect x="13" y="15" width="6" height="6" stroke="#5b5b5b" strokeWidth={2.400} />
          </Icon>
          <Icon w={33} h={34} className="ml-[8px] mb-[2px]">
            <path d="M2 22V10l8 12V10" stroke="#4fa3dc" strokeWidth={3.200} />
            <path d="M15.500 0v34M17 33l14 -18" stroke="#6b6b6b" strokeWidth={2} />
            <path d="M18 5c6 -2 9 1 9 8M22 9l5 5l5 -5" stroke="#4fa3dc" strokeWidth={2.600} />
          </Icon>
          <Chevron className="ml-[12px]" w={16} c="#262626" sw={3} />
          <Sep className="ml-[16px] h-[28px]" />
          <Fit w={329} className="ml-[202px] mt-[4px]">4,892,871.31E 2,112,644.25N m</Fit>
          <Chevron className="ml-[21px] mt-[2px]" w={18} sw={4} />
          <Sep className="ml-[202px] h-[28px]" />
          <Icon w={33} h={32} className="ml-[13px] opacity-50">
            <rect x="14" y="2" width="18" height="18" fill="#b4e8fa" stroke="#6b6b6b" strokeWidth={2} />
            <path d="M18 2l6 8l8 -6M24 10v10" stroke="#6b6b6b" strokeWidth={1.600} />
            <circle cx="10" cy="17" r="8" fill="#fff" stroke="#5b9ccb" strokeWidth={2.200} />
            <path d="M10 13v8M6 17h8" stroke="#4c4c4c" strokeWidth={2} />
            <path d="M16 23l8 8" stroke="#cf9a5c" strokeWidth={3.500} />
          </Icon>
          <Fit w={212} className="ml-[8px] mt-[2px] text-[#9a9a9a]">Selected Features: 0</Fit>
          <Sep className="ml-[13px] h-[28px]" />
          <Icon w={25} h={25} className="ml-[19px] mt-[2px] opacity-60">
            <path d="M1 1h22v22H1zM4 1c2 8 8 6 8 14v8M12 12l10 -8" stroke="#8a8a8a" strokeWidth={2} />
          </Icon>
          <Sep className="ml-[17px] h-[28px]" />
          <div className="ml-[16px] h-[28px] w-[8px] flex-none bg-[#5f5f5f]" />
          <div className="ml-[6px] h-[28px] w-[8px] flex-none bg-[#5f5f5f]" />
          <Sep className="ml-[18px] h-[28px]" />
          <Refresh className="ml-[12px]" />
        </div>
      </div>
    </div>
  );
}

/* ------------------------------------------------------------------ */
/* Attribute table                                                     */
/* ------------------------------------------------------------------ */
const heads: [string, number][] = [["FID", 44], ["Shape *", 102], ["vereda_id", 128], ["COUNT_...", 137], ["APha", 71], ["AGha", 73], ["PPm", 61], ["PGm", 65], ["Nodos", 88]];
const rows = [
  ["2", "Polygon", "2589900000004", "2775", "574.418592", "575.172013", "45891.591098", "45921.674371", "5641"],
  ["4", "Polygon", "2589900000006", "1959", "714.647693", "715.588684", "55180.488596", "55216.800438", "4267"],
  ["5", "Polygon", "2589900000007", "1047", "602.762111", "603.540097", "18340.562414", "18352.409689", "3918"],
  ["12", "Polygon", "2589900000014", "841", "1195.076418", "1196.605022", "19527.34966", "19539.824305", "5124"],
  ["11", "Polygon", "2589900000013", "674", "1614.088557", "1617.04101", "25397.881858", "25414.030081", "11433"],
];
const gridCols = "grid-cols-[58px_68px_126px_236px_188px_184px_184px_199px_199px_110px]";

function Tool({ icon, label, w, gap, dim = false }: { icon: React.ReactNode; label: string; w: number; gap: string; dim?: boolean }) {
  return (
    <div className={`flex flex-none items-center ${gap} ${dim ? "text-[#c2c2c2]" : ""}`}>
      <span className={`flex-none ${dim ? "opacity-40" : ""}`}>{icon}</span>
      <Fit w={w} className="ml-[7px] mt-[2px]">{label}</Fit>
    </div>
  );
}

function TablePane() {
  return (
    <div className="mt-[13px] flex h-[556px] flex-none flex-col">
      <div className="flex h-[44px] flex-none items-center">
        <div className="flex h-[44px] w-[531px] flex-none items-center rounded-t-[8px] bg-[#d2d3d7] text-[23px] text-[#4a4a4a]">
          <TableIcon className="ml-[12px]" />
          <Fit w={426} className="ml-[11px] mt-[5px]">Vereda_DiagnosticoPO...renoPredioRural</Fit>
          <Cross className="ml-[18px]" c="#6e6e6e" />
        </div>
        <Chevron className="ml-[1149px]" c="#6b6b6b" />
      </div>
      <div className="h-[6px] flex-none bg-[#d2d3d7]" />
      <div className="flex flex-1 flex-col border-x-2 border-b-2 border-[#d0d3d7] bg-[#f7f9f8] px-[2px] pt-[2px]">
        <div className="flex h-[60px] flex-none items-center border-2 border-[#c0c3c8] bg-[#f0f1f3] text-[23.500px] text-[#4a4a4a]">
          <Fit w={61} className="ml-[9px] mt-[2px] font-bold">Field:</Fit>
          <Tool gap="ml-[16px]" w={43} label="Add" icon={<TableIcon mark="+" />} />
          <Tool gap="ml-[20px]" w={98} label="Calculate" icon={<TableIcon mark="=" />} />
          <div className="ml-[20px] h-[44px] w-[2px] flex-none bg-[#d0d3d7]" />
          <Fit w={112} className="ml-[14px] mt-[2px] font-bold">Selection:</Fit>
          <Tool gap="ml-[16px]" w={209} label="Select By Attributes" icon={
            <Icon w={31} h={32}>
              <path d="M1 1h18v18H1z" fill="#b4e8fa" stroke="#6b6b6b" strokeWidth={2} />
              <path d="M7 2h11v8l-5 -1z" fill="#fff" stroke="#6b6b6b" strokeWidth={1.600} />
              <path d="M11 12h19v19H11z" fill="#fff" stroke="#f0f1f3" strokeWidth={4} />
              <path d="M12 13h18v5H12z" fill="#5da8dc" />
              <path d="M12 13h18v17H12zM12 18h18M12 24h18M18 18v12M24 18v12" stroke="#5b5b5b" strokeWidth={2} />
            </Icon>} />
          <Tool dim gap="ml-[18px]" w={96} label="Zoom To" icon={
            <Icon w={31} h={32}>
              <path d="M13 2h17v18H13zM13 8h17M13 14h17" fill="#eee" stroke="#6b6b6b" strokeWidth={2} />
              <circle cx="10" cy="17" r="8.500" fill="#fff" stroke="#5b9ccb" strokeWidth={2.400} />
              <path d="M10 13v8M6 17h8" stroke="#4c4c4c" strokeWidth={2} />
              <path d="M15 23l8 8" stroke="#cf9a5c" strokeWidth={3.500} />
            </Icon>} />
          <Tool gap="ml-[19px]" w={69} label="Switch" icon={
            <Icon w={32} h={32}>
              <path d="M1 2h17v12H1zM1 6h17M1 10h17M13 18h18v13H13z" fill="#fff" stroke="#5b5b5b" strokeWidth={2} />
              <path d="M13 22h18v4H13z" fill="#8fdcf5" />
              <path d="M13 18h18v13H13zM13 22h18M13 26h18M21 4c5 -1 7 2 7 9M24 9l4 5l4 -5M11 29c-5 0 -6 -2 -6 -10M1 22l4 -5l4 5" stroke="#5b5b5b" strokeWidth={2} />
            </Icon>} />
          <Tool dim gap="ml-[20px]" w={55} label="Clear" icon={<ListIcon a="#fff" b="#f3f3f3" />} />
          <Tool dim gap="ml-[20px]" w={69} label="Delete" icon={
            <Icon w={31} h={32}>
              <path d="M1 3h28v24H1z" fill="#fff" /><path d="M1 9h28v6H1z" fill="#8fdcf5" />
              <path d="M1 3h28v24H1zM1 9h28M1 15h28M1 21h28" stroke="#6b6b6b" strokeWidth={2} />
              <path d="M4 19l11 12M15 19L4 31" stroke="#d84a32" strokeWidth={3.500} />
            </Icon>} />
          <Tool dim gap="ml-[20px]" w={55} label="Copy" icon={
            <Icon w={32} h={32}>
              <path d="M7 2h24v18H7z" fill="#8fdcf5" stroke="#6b6b6b" strokeWidth={2} />
              <path d="M1 12h24v18H1z" fill="#fff" /><path d="M1 18h24v6H1z" fill="#8fdcf5" />
              <path d="M1 12h24v18H1zM1 18h24M1 24h24" stroke="#6b6b6b" strokeWidth={2} />
            </Icon>} />
          <Hamburger className="ml-auto mr-[14px]" />
        </div>
        <div className="mt-[3px] flex h-[385px] flex-none border-2 border-[#cbcdd0] bg-white">
          <div className="flex flex-1 flex-col">
            <div className="h-[336px] w-[1553px] overflow-hidden text-[27px] text-[#4a4a4a]">
              <div className={`grid ${gridCols} h-[62px] font-bold`}>
                <div className="flex items-end justify-end border-b-2 border-[#d0d0d0] bg-white pb-[8px] pr-[6px]">
                  <Icon w={25} h={25}><path d="M25 0v25H0z" fill="#c9c9c9" /></Icon>
                </div>
                {heads.map(([h, w], i) => (
                  <div key={h} className={`flex items-center border-r-2 border-[#d0d0d0] pl-[11px] ${i === 4 ? "border-b-[6px] border-b-[#0079c1] bg-[#c8e2f5] pt-[8px]" : "border-b-2 bg-[#ebebeb] pt-[4px]"}`}>
                    <Fit w={w}>{h}</Fit>
                    {i === 3 && <Icon w={18} h={11} className="ml-[14px] mb-[6px]"><path d="M0 0h18L9 11z" fill="#4a4a4a" /></Icon>}
                  </div>
                ))}
              </div>
              {rows.map((r, ri) => (
                <div key={ri} className={`grid ${gridCols} h-[61.300px]`}>
                  <div className={`flex items-center border-b-2 border-[#d0d0d0] pl-[11px] pt-[4px] ${ri === 0 ? "border-r-[5px] border-r-[#0079c1] bg-[#c8e2f5]" : "border-r-2 bg-[#ebebeb]"}`}>{ri + 1}</div>
                  {r.map((v, i) => (
                    <div key={i} className={`flex items-center whitespace-nowrap border-b-[3px] border-r-[3px] border-[#cbcbcb] pt-[4px] ${i > 2 ? "justify-end pr-[9px]" : "pl-[11px]"} ${ri === 0 && i === 4 ? "bg-[#c8e2f5]" : ri % 2 ? "bg-[#ebebeb]" : "bg-white"}`}>
                      {i === 1 ? <Fit w={103}>{v}</Fit> : v}
                    </div>
                  ))}
                </div>
              ))}
            </div>
            <div className="flex flex-1 items-center justify-between bg-[#f5f5f5] px-[17px]">
              <Icon w={11} h={18}><path d="M10 1L2 9l8 8" stroke="#c9c9c9" strokeWidth={2} /></Icon>
              <Icon w={11} h={18}><path d="M1 1l8 8l-8 8" stroke="#c9c9c9" strokeWidth={2} /></Icon>
            </div>
          </div>
          <div className="flex w-[46px] flex-none flex-col items-center bg-[#ededed]">
            <Chevron up className="mt-[16px]" />
            <div className="mt-[21px] h-[75px] w-[24px] flex-none rounded-[12px] bg-[#b5b5b5]" />
            <Chevron className="mt-[184px]" />
          </div>
        </div>
        <div className="flex flex-1 items-center text-[23px] text-[#4a4a4a]">
          <div className="flex h-[44px] w-[63px] flex-none items-center justify-center border-2 border-[#35a6e8] bg-[#c3c5ca]">
            <ListIcon a="#fff" b="#a9e4f7" s="#5b5b5b" />
          </div>
          <Icon w={30} h={22} className="ml-[21px] mb-[6px]">
            <path d="M1 1h28v18H1zM1 7h28M1 13h28" fill="#a9e4f7" stroke="#5b5b5b" strokeWidth={2} />
          </Icon>
          <Icon w={20} h={20} className="ml-[35px] mb-[2px]"><path d="M1.500 0v20" stroke="#b5b5b5" strokeWidth={2} /><path d="M19 1v18L5 10z" fill="#b5b5b5" /></Icon>
          <Icon w={20} h={20} className="ml-[26px] mb-[2px]"><path d="M18.500 0v20" stroke="#4c4c4c" strokeWidth={2} /><path d="M1 1v18l14 -9z" fill="#4c4c4c" /></Icon>
          <Fit w={170} className="ml-[25px] mt-[4px]">0 of 14 selected</Fit>
          <Fit w={68} className="ml-[558px] mt-[4px]">Filters:</Fit>
          <div className="ml-[10px] flex h-[47px] w-[84px] flex-none items-center justify-center gap-[9px] bg-[#f0f1f3]">
            <Icon w={32} h={32} className="opacity-50">
              <circle cx="16" cy="16" r="14" fill="#e6ece9" stroke="#b5b5b5" strokeWidth={2} />
              <path d="M16 8v9h7" stroke="#9a9a9a" strokeWidth={2} />
              <path d="M8 20c6 -2 10 2 8 7" stroke="#b6d7b8" strokeWidth={3} />
            </Icon>
            <Icon w={32} h={32} className="opacity-50">
              <circle cx="16" cy="16" r="14" fill="#e6ece9" stroke="#b5b5b5" strokeWidth={2} />
              <path d="M5 1v13M13 1v13M21 1v13M2 9h6M10 5h6M18 9h6" stroke="#8cc0e4" strokeWidth={2} />
              <path d="M12 20c6 -2 10 2 8 7" stroke="#b6d7b8" strokeWidth={3} />
            </Icon>
          </div>
          <Icon w={34} h={32} className="ml-[7px]">
            <path d="M1 2h26v3l-9 9v16h-7V14L1 5z" fill="#a8a8a8" stroke="#5b5b5b" strokeWidth={2} />
            <path d="M15 14h19v18H15z" fill="#f7f9f8" />
            <path d="M19 14v18M25 14v18M31 14v18" stroke="#4fa3dc" strokeWidth={4} strokeDasharray="4 2.500" />
          </Icon>
          <Sep className="ml-[3px] h-[30px]" />
          <Icon w={18} h={32} className="ml-[13px]">
            <path d="M9 16V4M2 9l7 -7l7 7" stroke="#4f9b55" strokeWidth={4} />
            <path d="M9 16v12M2 23l7 7l7 -7" stroke="#e59a3c" strokeWidth={4} />
          </Icon>
          <div className="ml-[30px] h-[4px] w-[12px] flex-none bg-[#5f5f5f]" />
          <div className="ml-[16px] h-[6px] w-[112px] flex-none bg-[#5f5f5f]" />
          <div className="h-[22px] w-[6px] flex-none bg-[#5f5f5f]" />
          <div className="h-[6px] w-[84px] flex-none bg-[#dfdfdf]" />
          <Icon w={18} h={18} className="ml-[12px]"><path d="M9 1v16M1 9h16" stroke="#5f5f5f" strokeWidth={4} /></Icon>
          <div className="ml-[12px] flex h-[44px] w-[121px] flex-none items-center bg-white text-[#1c1c1c]">
            <Fit w={66} className="ml-[13px] mt-[4px]">130 %</Fit>
            <Tri className="ml-[21px]" />
          </div>
          <Sep className="ml-[10px] h-[30px]" />
          <Refresh className="ml-[13px]" />
        </div>
      </div>
    </div>
  );
}

/* ------------------------------------------------------------------ */
/* Label Class pane                                                    */
/* ------------------------------------------------------------------ */
const fields: [string, number][] = [["Codigo Identificacion Vereda", 307], ["Nombre Vereda", 168], ["Shape_Length", 150], ["Shape_Area", 124], ["APha", 54], ["AGha", 57], ["PPm", 47]];
const funcs: [string, number][] = [["Log()", 53], ["Max()", 59], ["Mean()", 74], ["Min()", 55], ["Number()", 101], ["Pow()", 56], ["Random()", 102]];

const Tag = ({ children, className = "" }: { children: React.ReactNode; className?: string }) => (
  <Icon w={48} h={48} className={className}>
    <path d="M2 24L22 4l17 15L21 42H6L2 38z" fill="#f6e9bf" stroke="#bf9a62" strokeWidth={2} />
    <path d="M14 24l10 -10M18 28l12 -12M23 31l9 -9" stroke="#d1b487" strokeWidth={1.800} />
    <circle cx="10" cy="33" r="4" fill="#fff" stroke="#bf9a62" strokeWidth={2} />
    <path d="M10 33c2 8 -3 11 -8 9" stroke="#7a7a7a" strokeWidth={2} />
    {children}
  </Icon>
);

function ListBox({ items, thumb, gap }: { items: [string, number][]; thumb: string; gap: string }) {
  return (
    <div className="flex h-[275px] w-[420px] flex-none overflow-hidden border-2 border-[#bfc2c7] bg-white">
      <div className="flex flex-1 flex-col pl-[10px] text-[#1c1c1c]">
        {items.map(([t, w]) => (
          <div key={t} className="flex h-[39.900px] flex-none items-center pt-px"><Fit w={w}>{t}</Fit></div>
        ))}
      </div>
      <div className="flex w-[35px] flex-none flex-col items-center justify-between bg-[#ebebeb] py-[11px]">
        <Chevron up w={14} c="#6b6b6b" />
        <div className={`w-[18px] rounded-[9px] bg-[#b5b5b5] ${thumb}`} />
        <div className={gap} />
        <Chevron w={14} c="#6b6b6b" />
      </div>
    </div>
  );
}

const Wrap = () => (
  <Icon w={20} h={16} className="ml-auto mr-[3px] mb-[2px]">
    <path d="M1 3h17v8H6M10 6l-5 5l5 4" stroke="#1f4a5c" strokeWidth={2.600} />
  </Icon>
);
const SqCheck = ({ on, label, w }: { on?: boolean; label: string; w: number }) => (
  <div className="flex h-[48px] flex-none items-center">
    <div className="ml-[11px] flex size-[28px] flex-none items-center justify-center border-2 border-[#8a8a8a] bg-white">{on && <CheckMark />}</div>
    <Fit w={w} className="ml-[8px] mt-[3px]">{label}</Fit>
  </div>
);

function LabelPane() {
  return (
    <div className="flex w-[912px] flex-none flex-col border-l-2 border-[#dcdee0] pl-[12px]">
      <div className="flex h-[1646px] w-[898px] flex-none flex-col rounded-t-[8px] border-2 border-[#d0d3d7] bg-[#f7f9f8] text-[23px] text-[#4a4a4a]">
        <div className="flex h-[60px] flex-none items-center pt-[4px]">
          <Fit w={298} className="ml-[11px] text-[29.500px] text-[#1f1f1f]">Label Class - VEREDA</Fit>
          <Chevron className="ml-[480px]" />
          <Pin className="ml-[20px] mb-[4px]" />
          <Cross className="ml-[18px] mb-[4px]" />
        </div>
        <div className="flex h-[40px] flex-none items-center">
          <Fit w={91} className="ml-[375px] mt-[2px] text-[28px]">Class 1</Fit>
          <Hamburger className="ml-[381px]" />
        </div>
        <div className="flex h-[58px] flex-none items-end pb-[3px]">
          <Fit w={59} className="ml-[13px] font-semibold text-[24.500px] leading-[34px]">Class</Fit>
          <Chevron className="mb-[7px] ml-[16px]" c="#262626" />
          <Fit w={83} className="ml-[33px] text-[24.500px] leading-[34px]">Symbol</Fit>
          <Fit w={91} className="ml-[20px] text-[24.500px] leading-[34px]">Position</Fit>
        </div>
        <div className="ml-[13px] h-[4px] w-[60px] flex-none bg-[#0079c1]" />
        <div className="flex h-[83px] flex-none items-center pt-[8px]">
          <Tag className="ml-[24px]">
            <path d="M24 24h20v20H24z" fill="#f7f9f8" />
            <path d="M30 24h-6v21h6M38 24h8v21h-6M30 38l9 -14" stroke="#5b5b5b" strokeWidth={2.200} />
          </Tag>
          <Icon w={44} h={50} className="ml-[17px]">
            <rect x="1.500" y="1.500" width="41" height="28" rx="3" fill="#fafafa" stroke="#5b5b5b" strokeWidth={2.400} />
            <path d="M6 7.500h32M6 12h32M6 16.500h32M6 21h32M6 25h20" stroke="#5da8dc" strokeWidth={2} />
            <text x="8" y="48.500" textLength="31" fontSize="20" fill="#5f5f5f" className="font-['Open_Sans',sans-serif]">SQL</text>
          </Icon>
          <Tag className="ml-[18px] mb-[4px]">
            <path d="M18 33h30v15H18z" fill="#fff" />
            <path d="M19 34h9v7h-9zM37 34h9v7h-9zM28 41h9v6h-9z" fill="#5da8dc" />
            <path d="M18.500 34h28v12.500h-28z" stroke="#5b5b5b" strokeWidth={2} />
          </Tag>
        </div>
        <div className="ml-[15px] flex h-[6px] w-[192px] flex-none items-end">
          <div className="h-[6px] w-[64px] bg-[#0079c1]" /><div className="h-[2px] flex-1 bg-[#c8c8c8]" />
        </div>
        <div className="mt-[27px] flex h-[44px] flex-none items-center">
          <Fit w={104} className="ml-[21px] mt-[4px]">Language</Fit>
          <div className="ml-[12px] flex h-[44px] w-[200px] items-center border-2 border-[#939393] bg-white text-[#1c1c1c]">
            <Fit w={73} className="ml-[4px] mt-[4px]">Arcade</Fit>
            <Tri className="ml-[101px]" />
          </div>
        </div>
        <div className="mt-[20px] flex h-[50px] flex-none items-center">
          <Fit w={46} className="ml-[21px] mt-[3px]">Title</Fit>
          <div className="ml-[70px] flex h-[50px] w-[200px] items-center border-2 border-[#939393] bg-white text-[#1c1c1c]">
            <Fit w={83} className="ml-[8px] mt-[3px]">Custom</Fit>
          </div>
        </div>
        <div className="mt-[26px] flex h-[40px] flex-none items-center">
          <Fit w={61} className="ml-[21px] mt-[3px]">Fields</Fit>
          <Funnel className="ml-[324px]" />
          <Fit w={104} className="ml-[17px] mt-[3px]">Functions</Fit>
          <div className="ml-[275px] flex size-[40px] items-center justify-center bg-[#9bcbee]"><Funnel /></div>
        </div>
        <div className="ml-[21px] mt-[15px] flex flex-none gap-[10px]">
          <ListBox items={fields} thumb="h-[144px]" gap="h-[36px]" />
          <ListBox items={funcs} thumb="h-[42px] mt-[92px]" gap="h-[38px]" />
        </div>
        <div className="ml-[21px] mt-[9px] flex h-[46px] w-[420px] flex-none items-center border-2 border-[#bfc2c7] bg-[#f0f1f3] text-[#8a8a8a]">
          <Fit w={134} className="ml-[10px] mt-[3px]">Insert Values</Fit>
          <Tri className="ml-[254px]" />
        </div>
        <div className="flex h-[46px] flex-none items-center">
          <Fit w={112} className="ml-[21px]">Expression</Fit>
        </div>
        <div className="ml-[21px] flex h-[430px] w-[850px] flex-none flex-col border-2 border-[#939393] bg-white pt-px font-['DejaVu_Sans_Mono',monospace] text-[21.600px] text-[#1c1c1c]">
          <div className="flex h-[32px] items-center whitespace-pre">
            <span className="text-[#008000]">$feature</span>.nombre<span className="text-[#808080]"> + </span><span className="text-[#008000]">textformatting.NewLine</span><span className="text-[#808080]"> + </span><span className="text-[#ff0000]">"A (ha): "</span><span className="text-[#808080]"> + </span><span className="text-[#9bbb59]">Round</span>
            <Wrap />
          </div>
          <div className="flex h-[32px] items-center whitespace-pre pl-[26px]">
            <span className="text-[#0000ff]">(</span><span className="text-[#008000]">$feature</span>.AGha, <span className="text-[#800000]">2</span><span className="text-[#0000ff]">)</span><span className="text-[#808080]"> + </span><span className="text-[#008000]">textformatting.NewLine</span><span className="text-[#808080]"> + </span><span className="text-[#ff0000]">"P (m):"</span><span className="text-[#808080]"> +</span>
            <Wrap />
          </div>
          <div className="flex h-[32px] items-center whitespace-pre pl-[26px]">
            <span className="text-[#9bbb59]">Round</span><span className="text-[#0000ff]">(</span><span className="text-[#008000]">$feature</span>.PGm, <span className="text-[#800000]">2</span><span className="text-[#0000ff]">)</span>
          </div>
        </div>
        <div className="flex h-[63px] flex-none items-center">
          <Icon w={32} h={28} className="ml-[589px]">
            <path d="M7 14C8 6 13 2 19 2c6 0 11 5 11 11.500S25 25 19 25c-2 0 -4 0 -5 -1" stroke="#4fa3dc" strokeWidth={2.800} />
            <path d="M0 11l8 10l8 -10l-8 3z" fill="#4fa3dc" />
          </Icon>
          <Icon w={30} h={26} className="ml-[45px]"><path d="M2 13l9 9L28 3" stroke="#62a866" strokeWidth={4.500} /></Icon>
          <Icon w={34} h={26} className="ml-[43px]">
            <path d="M1.500 24V4h4l2 -3h6l2 3h13v5" stroke="#d8c148" strokeWidth={2.400} />
            <path d="M7 10h26l-3 16H2z" fill="#dcc54c" />
          </Icon>
          <Icon w={32} h={28} className="ml-[43px]"><path d="M0 14h28M15 2l13 12l-13 12" stroke="#62a866" strokeWidth={5} /></Icon>
        </div>
        <div className="mt-[6px] flex flex-none flex-col">
          <SqCheck on w={533} label="Insert fields with coded value description function" />
          <SqCheck on w={223} label="Remove extra spaces" />
          <SqCheck w={268} label="Remove extra line breaks" />
        </div>
        <div className="flex h-[46px] flex-none items-center">
          <Fit w={378} className="ml-[11px] mt-[2px] text-[#00619b]">Learn more about label expressions</Fit>
        </div>
        <div className="mt-auto flex h-[54px] flex-none justify-end gap-[16px] text-[#cfcfcf]">
          <div className="flex h-[48px] w-[140px] items-center justify-center border-2 border-[#b5b7ba] bg-[#fbfcfc] pt-[3px]"><Fit w={62}>Apply</Fit></div>
          <div className="flex h-[48px] w-[140px] items-center justify-center border-2 border-[#b5b7ba] bg-[#fbfcfc] pt-[3px]"><Fit w={71}>Cancel</Fit></div>
        </div>
      </div>
      <div className="-mt-[2px] flex h-[42px] flex-none items-center text-[23px] text-[#3c3c3c]">
        <Fit w={81} className="ml-[11px] mt-[2px]">Catalog</Fit>
        <Fit w={158} className="ml-[24px] mt-[2px]">Geoprocessing</Fit>
        <Fit w={171} className="ml-[25px] mt-[2px]">Chart Properties</Fit>
        <div className="ml-[14px] flex h-[42px] w-[139px] items-center justify-center rounded-b-[8px] border-2 border-t-0 border-[#d0d3d7] bg-[#f7f9f8] pt-[4px] text-[#0079c1]">
          <Fit w={116}>Label Class</Fit>
        </div>
        <Fit w={119} className="ml-[12px] mt-[2px]">Symbology</Fit>
      </div>
    </div>
  );
}

export default function App() {
  return (
    <div className="flex h-[1838px] w-[3072px] flex-col overflow-hidden bg-[#ebebeb] font-['Open_Sans',sans-serif]">
      <div className="h-[115px] flex-none border-b-2 border-[#c0c2c8] bg-[#f7f9f8]">
        <TitleBar />
        <Ribbon />
      </div>
      <div className="flex h-[1711px] flex-none pt-[12px]">
        <div className="ml-[11px] flex h-[1686px]"><Contents /></div>
        <div className="ml-[12px] flex h-[1686px] w-[1706px] flex-none flex-col"><MapPane /><TablePane /></div>
        <div className="-ml-[1px] flex h-[1686px]"><LabelPane /></div>
      </div>
      <div className="flex-1 border-t-2 border-[#c0c0c0] bg-[#efefef]" />
    </div>
  );
}
